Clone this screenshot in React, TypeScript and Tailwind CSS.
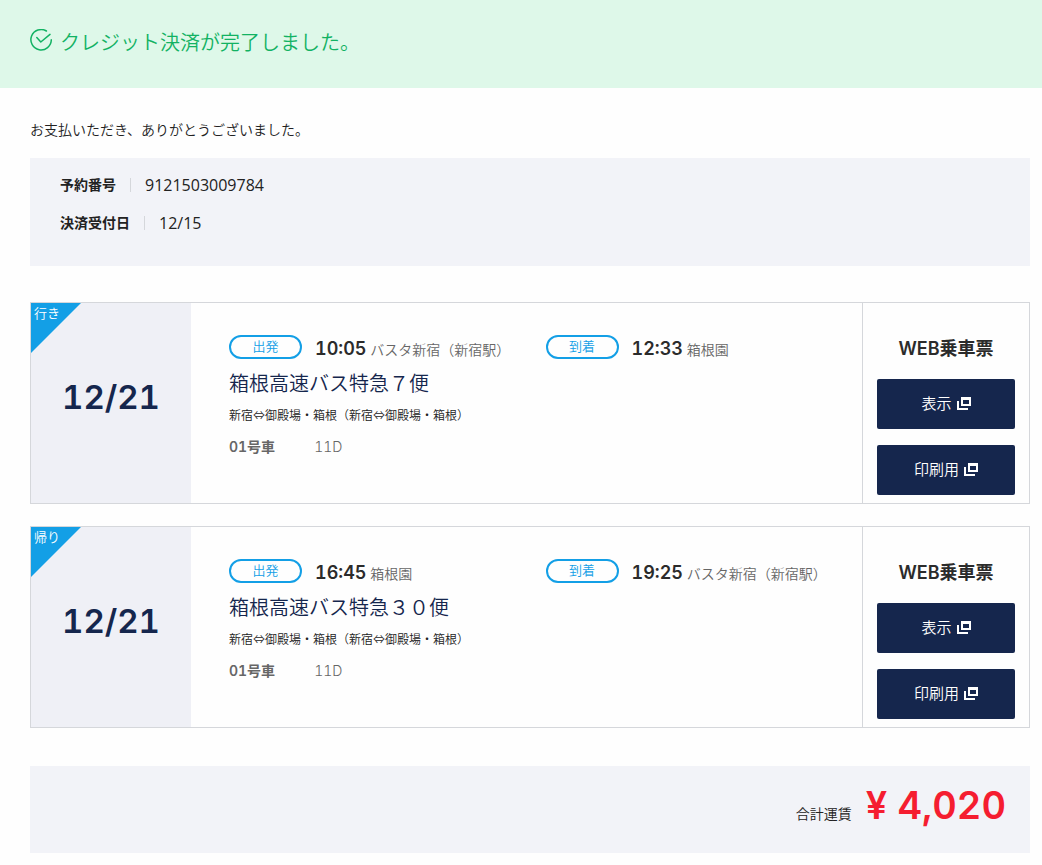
interface Stop {
  time: string;
  place: string;
}

interface Trip {
  direction: string;
  date: string;
  departure: Stop;
  arrival: Stop;
  name: string;
  route: string;
  car: string;
  seat: string;
}

const trips: Trip[] = [
  {
    direction: '行き',
    date: '12/21',
    departure: { time: '10:05', place: 'バスタ新宿（新宿駅）' },
    arrival: { time: '12:33', place: '箱根園' },
    name: '箱根高速バス特急７便',
    route: '新宿⇔御殿場・箱根（新宿⇔御殿場・箱根）',
    car: '01号車',
    seat: '11D',
  },
  {
    direction: '帰り',
    date: '12/21',
    departure: { time: '16:45', place: '箱根園' },
    arrival: { time: '19:25', place: 'バスタ新宿（新宿駅）' },
    name: '箱根高速バス特急３０便',
    route: '新宿⇔御殿場・箱根（新宿⇔御殿場・箱根）',
    car: '01号車',
    seat: '11D',
  },
];

const reservation = [
  { label: '予約番号', value: '9121503009784' },
  { label: '決済受付日', value: '12/15' },
];

function CheckIcon() {
  return (
    <svg
      width="22"
      height="22"
      viewBox="0 0 22 22"
      fill="none"
      stroke="currentColor"
      strokeWidth="1.5"
      strokeLinecap="round"
      strokeLinejoin="round"
      aria-hidden="true"
    >
      <path d="M16.4 2A10.2 10.2 0 1 0 21.3 10.8" />
      <path d="M6.8 8.6l4 4.4L20 5.4" />
    </svg>
  );
}

function WindowIcon() {
  return (
    <svg width="14" height="14" viewBox="0 0 14 14" fill="currentColor" aria-hidden="true">
      <path fillRule="evenodd" d="M4 0h10v9H4zM6 3v4h6V3z" />
      <path d="M0 4h2v7h9v2H0z" />
    </svg>
  );
}

function StopInfo({ label, stop }: { label: string; stop: Stop }) {
  return (
    <div className="flex items-start gap-[13px]">
      <span className="flex h-6 w-[73px] shrink-0 items-center justify-center rounded-full border-2 border-[#139fe6] pb-px text-[13px] leading-none font-[350] text-[#139fe6]">
        {label}
      </span>
      <p className="text-sm leading-7 font-[350] text-[#666]">
        <span className="text-lg leading-7 font-semibold text-[#2b2b2b]">{stop.time}</span> {stop.place}
      </p>
    </div>
  );
}

function TicketButton({ children }: { children: string }) {
  return (
    <button
      type="button"
      className="flex h-[50px] w-full cursor-pointer items-center justify-center gap-[5px] rounded-xs bg-[#15264d] text-[15px] font-[350] text-white"
    >
      {children}
      <WindowIcon />
    </button>
  );
}

function TripCard({ trip }: { trip: Trip }) {
  return (
    <section className="flex border border-[#d5d7db]">
      <div className="relative flex w-40 shrink-0 items-center justify-center bg-[#eff0f6]">
        <div className="absolute top-0 left-0 size-[50px] bg-[#139fe6] pl-[3px] text-[13px] leading-5 font-[350] text-white [clip-path:polygon(0_0,100%_0,0_100%)]">
          {trip.direction}
        </div>
        <p className="pb-3 text-[33px] leading-10 font-semibold text-[#15264d]">{trip.date}</p>
      </div>

      <div className="min-w-0 flex-1 pt-8 pl-[38px]">
        <div className="grid grid-cols-2">
          <StopInfo label="出発" stop={trip.departure} />
          <StopInfo label="到着" stop={trip.arrival} />
        </div>
        <h2 className="mt-2 text-xl leading-6 font-[350] text-[#15264d]">{trip.name}</h2>
        <p className="mt-2 font-['Noto_Sans_CJK_JP',sans-serif] text-xs leading-[22px] font-[350] text-[#222]">
          {trip.route}
        </p>
        <div className="mt-2 flex gap-[39px] text-sm leading-[26px] text-[#666]">
          <span className="font-semibold">{trip.car}</span>
          <span className="font-[350]">{trip.seat}</span>
        </div>
      </div>

      <div className="flex w-[167px] shrink-0 flex-col gap-4 border-l border-[#d5d7db] px-3.5 pt-8 pb-2">
        <h3 className="text-center text-lg leading-7 font-semibold text-[#2b2b2b]">WEB乗車票</h3>
        <TicketButton>表示</TicketButton>
        <TicketButton>印刷用</TicketButton>
      </div>
    </section>
  );
}

export default function App() {
  return (
    <div
      lang="ja"
      className="min-h-screen bg-[#fefefe] font-['Inter','Noto_Sans_CJK_JP',sans-serif] text-[#222] tabular-nums"
    >
      <header className="flex items-start gap-2 bg-[#def8e9] px-[30px] pt-[29px] pb-[31px] text-[#12b263]">
        <CheckIcon />
        <h1 className="text-xl leading-7 font-[350]">クレジット決済が完了しました。</h1>
      </header>

      <main className="pt-8 pr-3 pb-3 pl-[30px]">
        <p className="text-sm leading-5 font-[350] text-[#222]">お支払いただき、ありがとうございました。</p>

        <dl className="mt-[18px] flex flex-col gap-3.5 bg-[#f2f3f8] px-[30px] pt-[15px] pb-[31px]">
          {reservation.map((item) => (
            <div key={item.label} className="flex items-center leading-6">
              <dt className="text-sm leading-6 font-bold">{item.label}</dt>
              <dd className="flex items-center font-['Open_Sans',sans-serif] text-base leading-6">
                <span className="mx-3.5 h-3.5 w-px bg-[#d5d7db]" />
                {item.value}
              </dd>
            </div>
          ))}
        </dl>

        <div className="mt-9 flex flex-col gap-[22px]">
          {trips.map((trip) => (
            <TripCard key={trip.direction} trip={trip} />
          ))}
        </div>

        <div className="mt-[38px] flex items-baseline justify-end gap-3.5 bg-[#f2f3f8] px-6 pt-[15px] pb-6">
          <span className="text-sm font-[350]">合計運賃</span>
          <strong className="text-[38px] leading-12 font-semibold text-[#f51d30]">¥ 4,020</strong>
        </div>
      </main>
    </div>
  );
}
